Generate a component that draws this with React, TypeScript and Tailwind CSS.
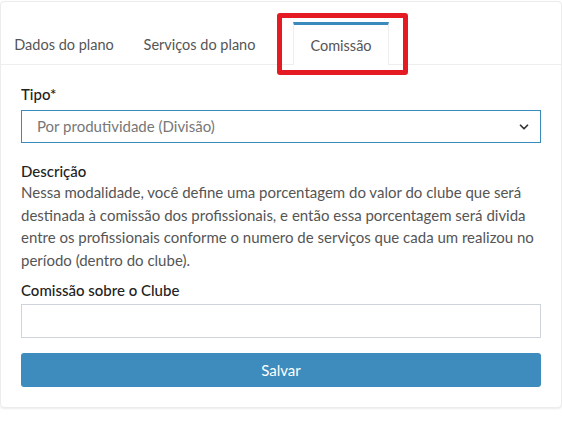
import { ChevronDown } from 'lucide-react'

export default function App() {
    const tabs = [
        { label: 'Dados do plano', w: 'w-[126px]' },
        { label: 'Serviços do plano', w: 'w-[145px]' },
    ]

    return (
        <div className="min-h-screen bg-white pt-px" style={{ fontFamily: 'Lato, "Noto Sans", sans-serif' }}>
            <div className="relative bg-white border border-[#ececec] shadow-[0_1px_2px_rgba(0,0,0,0.08)] rounded-sm">
                {/* abas */}
                <div className="flex items-end h-[63px] border-b border-[#eeeeee]">
                    {tabs.map((t) => (
                        <div key={t.label} className={`${t.w} h-[43px] pt-[4px] flex items-center justify-center text-[14.5px] text-[#555]`}>
                            {t.label}
                        </div>
                    ))}
                    <div className="ml-[21px] w-[96px] h-[43px] pt-[2px] -mb-px bg-white border-t-[3px] border-t-[#3a8bbd] border-x border-x-[#eeeeee] flex items-center justify-center text-[14.5px] text-[#555]">
                        Comissão
                    </div>
                </div>

                {/* destaque vermelho */}
                <div className="absolute left-[276px] top-[11px] w-[131px] h-[62px] border-[5px] border-[#e51b23] rounded-[3px]" />

                <div className="px-5 pt-[19px] pb-5">
                    <label className="block text-[15px] leading-[20px] font-medium text-[#222] mb-[6px]">Tipo*</label>
                    <div className="relative h-[33px] border border-[#3a8bbd] flex items-center pl-[15px] text-[15px] text-[#777]">
                        Por produtividade (Divisão)
                        <ChevronDown className="absolute right-[9px] top-[9px] w-[14px] h-[14px] text-[#333]" strokeWidth={3} />
                    </div>

                    <h4 className="mt-[18px] text-[15px] leading-[20px] font-medium text-[#222]">Descrição</h4>
                    <p className="text-[15px] leading-[22.5px] text-[#555]">
                        Nessa modalidade, você define uma porcentagem do valor do clube que será destinada à comissão dos profissionais, e então essa porcentagem será divida entre os profissionais conforme o numero de serviços que cada um realizou no período (dentro do clube).
                    </p>

                    <label className="block mt-[9px] text-[15px] leading-[20px] font-medium text-[#222] mb-[4px]">Comissão sobre o Clube</label>
                    <input className="block w-full h-[34px] border border-[#cfd3dc] outline-none" />

                    <button className="mt-[15px] w-full h-[34px] bg-[#3d8cbd] rounded-[3px] text-white text-[15px]">
                        Salvar
                    </button>
                </div>
            </div>
        </div>
    )
}
